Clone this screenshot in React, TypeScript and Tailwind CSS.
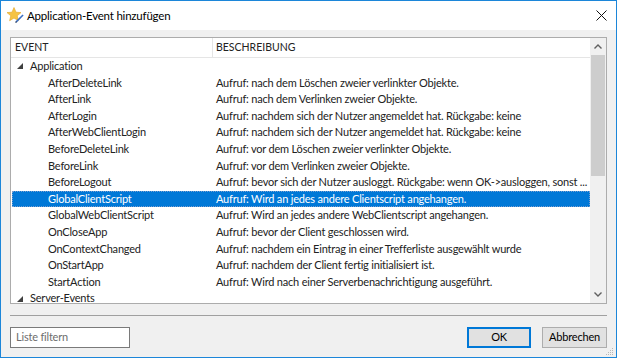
import React from "react";

const font = { fontFamily: 'Lato, "Noto Sans", sans-serif' };

type Row = { name: string; desc: string; group?: boolean; selected?: boolean };

const rows: Row[] = [
  { name: "Application", desc: "", group: true },
  { name: "AfterDeleteLink", desc: "Aufruf: nach dem Löschen zweier verlinkter Objekte." },
  { name: "AfterLink", desc: "Aufruf: nach dem Verlinken zweier Objekte." },
  { name: "AfterLogin", desc: "Aufruf: nachdem sich der Nutzer angemeldet hat. Rückgabe: keine" },
  { name: "AfterWebClientLogin", desc: "Aufruf: nachdem sich der Nutzer angemeldet hat. Rückgabe: keine" },
  { name: "BeforeDeleteLink", desc: "Aufruf: vor dem Löschen zweier verlinkter Objekte." },
  { name: "BeforeLink", desc: "Aufruf: vor dem Verlinken zweier Objekte." },
  { name: "BeforeLogout", desc: "Aufruf: bevor sich der Nutzer ausloggt. Rückgabe: wenn OK->ausloggen, sonst ..." },
  { name: "GlobalClientScript", desc: "Aufruf: Wird an jedes andere Clientscript angehangen.", selected: true },
  { name: "GlobalWebClientScript", desc: "Aufruf: Wird an jedes andere WebClientscript angehangen." },
  { name: "OnCloseApp", desc: "Aufruf: bevor  der Client geschlossen wird." },
  { name: "OnContextChanged", desc: "Aufruf: nachdem ein Eintrag in einer Trefferliste ausgewählt wurde" },
  { name: "OnStartApp", desc: "Aufruf: nachdem der Client fertig initialisiert ist." },
  { name: "StartAction", desc: "Aufruf: Wird nach einer Serverbenachrichtigung ausgeführt." },
  { name: "Server-Events", desc: "", group: true },
];

function Expander() {
  return (
    <svg width="6" height="6" viewBox="0 0 6 6" className="shrink-0">
      <path d="M6 0 L6 6 L0 6 Z" fill="#404040" />
    </svg>
  );
}

function TitleIcon() {
  return (
    <svg width="18" height="18" viewBox="0 0 18 18">
      <path
        d="M8 1.5 L10 6.2 L15 6.6 L11.2 9.8 L12.4 14.7 L8 12.1 L3.6 14.7 L4.8 9.8 L1 6.6 L6 6.2 Z"
        fill="#f6c343"
        stroke="#e0a322"
        strokeWidth="0.6"
      />
      <path d="M16.5 8.5 L17.6 9.6 L11 16.2 L9.4 16.7 L9.9 15.1 Z" fill="#3b6fc4" />
      <path d="M9.9 15.1 L11 16.2 L9.4 16.7 Z" fill="#222" />
    </svg>
  );
}

export default function App() {
  return (
    <div
      className="w-[617px] h-[358px] flex flex-col border border-[#1c86d9] bg-[#f0f0f0] text-[11px] tracking-[-0.2px] text-black overflow-hidden"
      style={font}
    >
      {/* Title bar */}
      <div className="h-[29px] bg-white flex items-center shrink-0">
        <div className="ml-[5px] mt-[-1px]">
          <TitleIcon />
        </div>
        <div className="ml-[3px] text-[11.5px] text-black">Application-Event hinzufügen</div>
        <div className="ml-auto mr-[9px]">
          <svg width="11" height="11" viewBox="0 0 11 11">
            <path d="M0.5 0.5 L10.5 10.5 M10.5 0.5 L0.5 10.5" stroke="#111" strokeWidth="1" />
          </svg>
        </div>
      </div>

      {/* Body */}
      <div className="flex-1 flex flex-col px-[9px] pt-[7px]">
        <div className="h-[267px] border border-[#acacac] bg-white flex">
          <div className="flex-1 flex flex-col min-w-0 overflow-hidden">
            {/* Header */}
            <div className="h-[20px] shrink-0 flex items-stretch border-b border-[#e5e5e5] text-[#222] text-[10.5px] tracking-normal">
              <div className="w-[202px] shrink-0 flex items-center pl-[4px] border-r border-[#e5e5e5]">EVENT</div>
              <div className="flex items-center pl-[3px]">BESCHREIBUNG</div>
            </div>
            {/* Rows */}
            <div className="flex flex-col">
              {rows.map((r) => (
                <div
                  key={r.name}
                  className={
                    r.selected
                      ? "h-[16.6px] shrink-0 flex items-center bg-[#0078d7] text-white outline-1 outline-dotted outline-[#7a9fd0] -outline-offset-1 ml-[1px]"
                      : "h-[16.6px] shrink-0 flex items-center text-[#222]"
                  }
                >
                  {r.group ? (
                    <div className="flex items-center pl-[6px] gap-[7px]">
                      <Expander />
                      <span>{r.name}</span>
                    </div>
                  ) : (
                    <>
                      <div
                        className={
                          r.selected
                            ? "w-[201px] shrink-0 pl-[36px] truncate"
                            : "w-[202px] shrink-0 pl-[37px] truncate"
                        }
                      >
                        {r.name}
                      </div>
                      <div className="pl-[3px] whitespace-nowrap">{r.desc}</div>
                    </>
                  )}
                </div>
              ))}
            </div>
          </div>

          {/* Scrollbar */}
          <div className="w-[16px] shrink-0 bg-[#f0f0f0] flex flex-col">
            <div className="h-[17px] flex items-center justify-center">
              <svg width="8" height="5" viewBox="0 0 8 5">
                <path d="M0.5 4.5 L4 1 L7.5 4.5" stroke="#606060" strokeWidth="1.4" fill="none" />
              </svg>
            </div>
            <div className="mx-[1px] h-[121px] bg-[#cdcdcd]" />
            <div className="flex-1" />
            <div className="h-[17px] flex items-center justify-center">
              <svg width="8" height="5" viewBox="0 0 8 5">
                <path d="M0.5 0.5 L4 4 L7.5 0.5" stroke="#606060" strokeWidth="1.4" fill="none" />
              </svg>
            </div>
          </div>
        </div>

        {/* Separator */}
        <div className="mt-[11px] h-px bg-[#a0a0a0]" />

        {/* Footer */}
        <div className="mt-[11px] flex items-center">
          <div className="w-[120px] h-[21px] shrink-0 border border-[#7a7a7a] bg-white flex items-center pl-[5px] text-[#6d6d6d]">
            Liste filtern
          </div>
          <div className="ml-auto flex gap-[11px]">
            <div className="w-[64px] h-[21px] shrink-0 border border-[#0078d7] bg-[#e1e1e1] flex items-center justify-center outline outline-1 outline-[#0078d7] -outline-offset-2">
              OK
            </div>
            <div className="w-[65px] h-[21px] shrink-0 border border-[#adadad] bg-[#e1e1e1] flex items-center justify-center">
              Abbrechen
            </div>
          </div>
        </div>
        <div className="flex-1 flex justify-end items-end pb-[2px]">
          <svg width="8" height="8" viewBox="0 0 8 8" className="mr-[-7px]">
            <g fill="#b8b8b8">
              <rect x="6" y="0" width="1" height="1" />
              <rect x="4" y="2" width="1" height="1" />
              <rect x="6" y="2" width="1" height="1" />
              <rect x="2" y="4" width="1" height="1" />
              <rect x="4" y="4" width="1" height="1" />
              <rect x="6" y="4" width="1" height="1" />
              <rect x="0" y="6" width="1" height="1" />
              <rect x="2" y="6" width="1" height="1" />
              <rect x="4" y="6" width="1" height="1" />
              <rect x="6" y="6" width="1" height="1" />
            </g>
          </svg>
        </div>
      </div>
    </div>
  );
}
